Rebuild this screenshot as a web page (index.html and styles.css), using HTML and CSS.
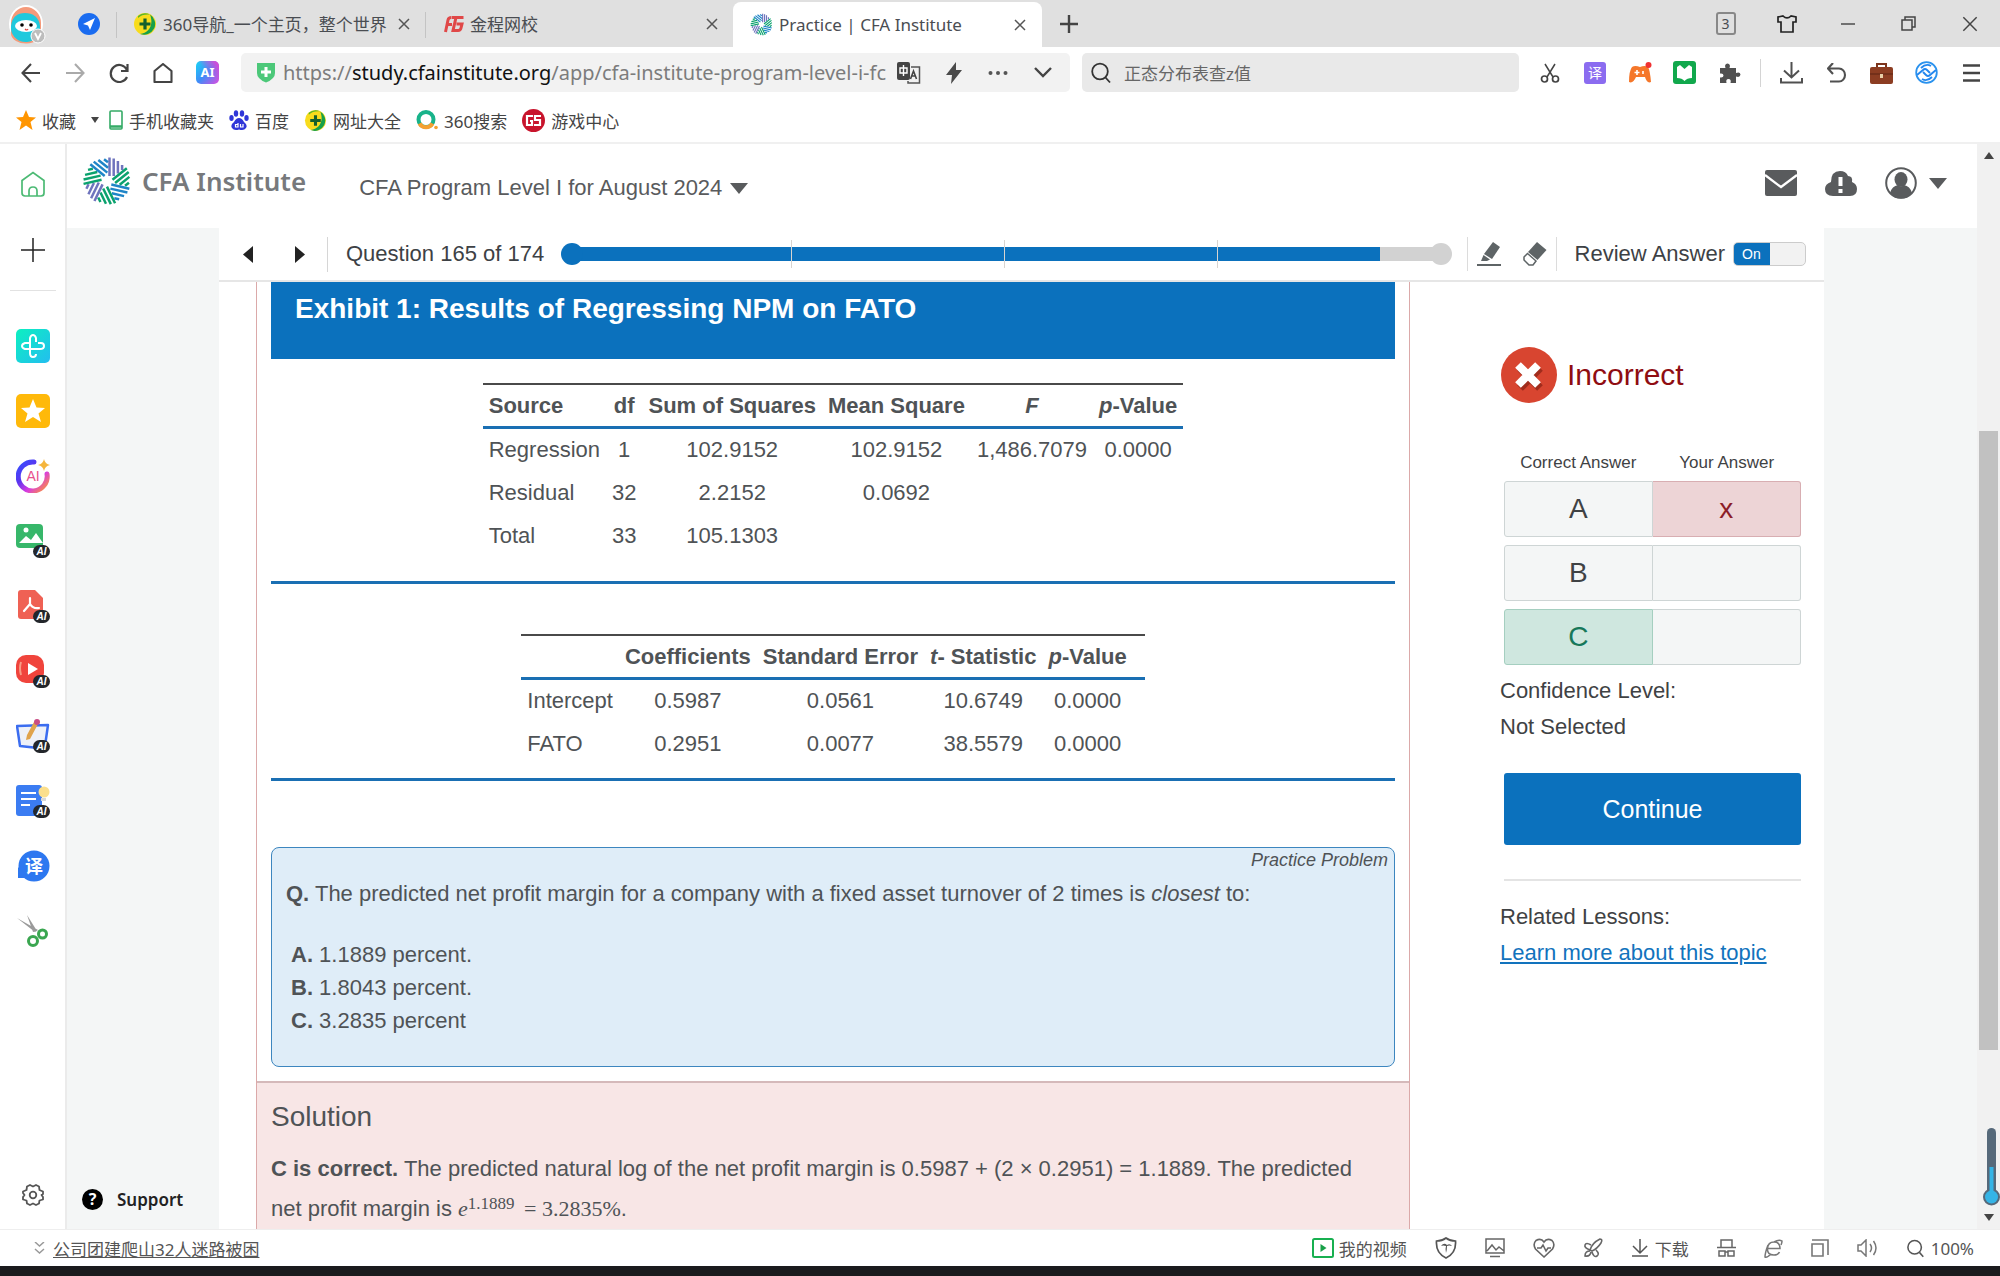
FILE: index.html
```html
<!DOCTYPE html>
<html lang="en">
<head>
<meta charset="utf-8">
<title>Practice | CFA Institute</title>
<link rel="stylesheet" href="styles.css">
</head>
<body>
<svg class="defs" aria-hidden="true">
  <defs>
    <linearGradient id="gAi" x1="0" y1="0" x2="1" y2="1"><stop offset="0" stop-color="#18d6f5"/><stop offset=".5" stop-color="#3f8cf8"/><stop offset="1" stop-color="#e04be0"/></linearGradient>
    <linearGradient id="gPink" x1="0" y1="1" x2="1" y2="0"><stop offset=".5" stop-color="#f43ccf" stop-opacity="0"/><stop offset="1" stop-color="#f43ccf"/></linearGradient>
    <linearGradient id="gTeal" x1="0" y1="0" x2="1" y2="1"><stop offset="0" stop-color="#0cf0c0"/><stop offset="1" stop-color="#23bdf0"/></linearGradient>
    <linearGradient id="gRing" x1="0" y1="0" x2="1" y2="1"><stop offset="0" stop-color="#3450ff"/><stop offset=".35" stop-color="#5a35f0"/><stop offset=".65" stop-color="#d83be0"/><stop offset="1" stop-color="#ff9a2e"/></linearGradient>
    <symbol id="ray" viewBox="0 0 50 50" overflow="visible">
      <path d="M27.500 20V1.500M31.700 20V2.500M35.900 17.500V5M40.100 14V9" fill="none" stroke-width="2.500"/>
    </symbol>
    <symbol id="burst" viewBox="0 0 50 50">
      <g stroke="#6f74bd" transform="rotate(0 25 25)"><use href="#ray" width="50" height="50"/></g>
      <g stroke="#0ba26e" transform="rotate(51 25 25)"><use href="#ray" width="50" height="50"/></g>
      <g stroke="#1f85c7" transform="rotate(103 25 25)"><use href="#ray" width="50" height="50"/></g>
      <g stroke="#0ba26e" transform="rotate(154 25 25)"><use href="#ray" width="50" height="50"/></g>
      <g stroke="#6f74bd" transform="rotate(206 25 25)"><use href="#ray" width="50" height="50"/></g>
      <g stroke="#0ba26e" transform="rotate(257 25 25)"><use href="#ray" width="50" height="50"/></g>
      <g stroke="#1f85c7" transform="rotate(309 25 25)"><use href="#ray" width="50" height="50"/></g>
    </symbol>
    <symbol id="plusball" viewBox="0 0 24 24">
      <circle cx="12" cy="12" r="11" fill="#f8dc1c"/><path d="M17 2.500A11 11 0 0 1 7 22c9-1 14-9 10-19.500z" fill="#18a04a"/><path d="M5 4a11 11 0 0 1 12-1.500C12 2 8 3 5 6z" fill="#58b52c"/>
      <path d="M12 6.500v11M6.500 12h11" stroke="#14602c" stroke-width="3.200"/>
    </symbol>
    <symbol id="cross" viewBox="0 0 12 12"><path d="M1 1l10 10M11 1L1 11" fill="none" stroke="#555" stroke-width="1.500"/></symbol>
    <symbol id="caret" viewBox="0 0 18 11"><path d="M0 0h18L9 11z" fill="currentColor"/></symbol>
    <symbol id="lens" viewBox="0 0 22 22"><circle cx="10" cy="9.500" r="7.800" fill="none" stroke="currentColor" stroke-width="1.800"/><path d="M15.500 15.500L20 20.500" stroke="currentColor" stroke-width="1.800"/></symbol>
    <symbol id="aibadge" viewBox="0 0 17 13"><rect width="17" height="13" rx="6.500" fill="#23262b"/><text x="8.500" y="10" font-size="10" font-weight="700" font-style="italic" fill="#fff" text-anchor="middle">AI</text></symbol>
  </defs>
</svg>

<div class="browser">
  <header class="tabstrip">
    <button class="avatar" aria-label="Profile"><svg width="38" height="40" viewBox="0 0 38 40"><ellipse cx="18" cy="20" rx="17" ry="19" fill="#fff"/><path d="M3 19a15 16 0 0 1 30 0v10a15 10 0 0 1-30 1z" fill="#f59a7a"/><path d="M3 22c1-9 6-13 14-13s14 4 15 13a14.500 14.500 0 0 1-29 3z" fill="#20c9dd"/><ellipse cx="18" cy="22" rx="11" ry="6" fill="#fff"/><circle cx="14" cy="21" r="1.800"/><circle cx="23" cy="21" r="1.800"/><path d="M17 25q2 2 3 0" fill="none" stroke="#d44" stroke-width="1.200"/><circle cx="30" cy="32" r="7" fill="#bdbdbd" stroke="#fff"/><path d="M27 29l3 6 3-6" fill="none" stroke="#fff" stroke-width="1.800"/></svg></button>
    <button class="nav-bubble" aria-label="Navigate"><svg width="22" height="22" viewBox="0 0 22 22"><circle cx="11" cy="11" r="11" fill="#1a6cf0"/><path d="M17 5L5 11l5 1.500L12 17z" fill="#fff"/></svg></button>
    <div class="tab tab-first"><svg width="24" height="24"><use href="#plusball"/></svg><span>360导航_一个主页，整个世界</span><button aria-label="Close tab"><svg width="12" height="12"><use href="#cross"/></svg></button></div>
    <div class="tab tab-wide"><svg width="20" height="18" viewBox="0 0 20 18"><path d="M8 2.500H19.500M7.500 2.500Q4.500 2.500 4 5L1.500 17M3 9.500h5M12 2.500L9 15.500h5q2.500 0 3-2.500l1-4h-5.500" fill="none" stroke="#e04848" stroke-width="3"/></svg><span>金程网校</span><button aria-label="Close tab"><svg width="12" height="12"><use href="#cross"/></svg></button></div>
    <div class="tab tab-active"><svg width="23" height="23"><use href="#burst"/></svg><span>Practice | CFA Institute</span><button aria-label="Close tab"><svg width="12" height="12"><use href="#cross"/></svg></button></div>
    <button class="newtab" aria-label="New tab"><svg width="18" height="18" viewBox="0 0 18 18"><path d="M9 0v18M0 9h18" stroke="#444" stroke-width="2.400"/></svg></button>
    <div class="window-tools">
      <button class="tool"><span class="count">3</span></button>
      <button class="tool" aria-label="Skins"><svg width="20" height="18" viewBox="0 0 20 18"><path d="M6 1q4 4 8 0l5 1v5h-3v10H4V7H1V2z" fill="none" stroke="#222" stroke-width="1.700"/></svg></button>
      <button class="tool" aria-label="Minimise"><svg width="14" height="14" viewBox="0 0 14 14"><path d="M0 7h14" stroke="#555" stroke-width="1.600"/></svg></button>
      <button class="tool" aria-label="Restore"><svg width="15" height="15" viewBox="0 0 15 15"><path d="M1 4h10v10H1zM4 4V1h10v10h-3" fill="none" stroke="#444" stroke-width="1.500"/></svg></button>
      <button class="tool" aria-label="Close"><svg width="16" height="16" viewBox="0 0 12 12"><path d="M1 1l10 10M11 1L1 11" stroke="#444" stroke-width="1.100"/></svg></button>
    </div>
  </header>

  <div class="toolbar">
    <div class="nav-buttons">
      <button aria-label="Back"><svg width="20" height="20" viewBox="0 0 20 20"><path d="M19 10H2M10 1L1.500 10l8.500 9" fill="none" stroke="#444" stroke-width="2.100"/></svg></button>
      <button aria-label="Forward"><svg width="20" height="20" viewBox="0 0 20 20"><path d="M1 10h17M10 1l8.500 9-8.500 9" fill="none" stroke="#aaa" stroke-width="2.100"/></svg></button>
      <button aria-label="Reload"><svg width="20" height="20" viewBox="0 0 20 20"><path d="M18 7A8.500 8.500 0 1 0 18 14M18.500 1v7H12" fill="none" stroke="#444" stroke-width="2.200"/></svg></button>
      <button aria-label="Home"><svg width="20" height="20" viewBox="0 0 20 20"><path d="M1.500 8L10 1l8.500 7v11h-17z" fill="none" stroke="#444" stroke-width="2.100" stroke-linejoin="round"/></svg></button>
      <button aria-label="AI"><svg width="23" height="23" viewBox="0 0 23 23"><rect width="23" height="23" rx="5" fill="url(#gAi)"/><rect width="23" height="23" rx="5" fill="url(#gPink)"/><text x="11.500" y="16" font-size="13" font-weight="700" fill="#fff" text-anchor="middle">AI</text></svg></button>
    </div>
    <div class="address">
      <svg width="20" height="21" viewBox="0 0 20 21"><path d="M1 1h18v10q0 6-9 9.500Q1 17 1 11z" fill="#4cc879"/><path d="M10 5v10M5 10h10" stroke="#fff" stroke-width="3"/></svg>
      <span class="url">https://<b>study.cfainstitute.org</b>/app/cfa-institute-program-level-i-fc</span>
      <button aria-label="Translate"><svg width="24" height="22" viewBox="0 0 24 22"><rect width="13" height="18" rx="2" fill="#444"/><path d="M3 6h7v5H3zM6.500 3v11" fill="none" stroke="#fff" stroke-width="1.400"/><path d="M14 5h8.500v16H11v-2" fill="none" stroke="#555" stroke-width="1.500"/><path d="M13.500 17l3-8 3 8M14.500 14h4" fill="none" stroke="#444" stroke-width="1.600"/></svg></button>
      <button aria-label="Accelerate"><svg width="18" height="22" viewBox="0 0 18 22"><path d="M11 0L1 13h6l-1 9L17 8h-6z" fill="#4a4a4a"/></svg></button>
      <button aria-label="More"><svg width="20" height="6" viewBox="0 0 20 6"><g fill="#555"><circle cx="2.500" cy="3" r="2"/><circle cx="10" cy="3" r="2"/><circle cx="17.500" cy="3" r="2"/></g></svg></button>
      <button aria-label="Expand"><svg width="18" height="11" viewBox="0 0 18 11"><path d="M1 1l8 8 8-8" fill="none" stroke="#444" stroke-width="2.400"/></svg></button>
    </div>
    <label class="search"><svg width="22" height="22"><use href="#lens"/></svg><input type="text" value="正态分布表查z值" aria-label="Search"></label>
    <div class="ext">
      <button aria-label="Cut"><svg width="20" height="20" viewBox="0 0 20 20"><path d="M5 1l8 13M15 1L7 14" stroke="#444" stroke-width="1.500"/><g fill="none" stroke="#444" stroke-width="1.700"><circle cx="4.500" cy="16" r="3"/><circle cx="15.500" cy="16" r="3"/></g></svg></button>
      <button aria-label="Dictionary"><svg width="22" height="22" viewBox="0 0 22 22"><rect width="22" height="22" rx="3" fill="#8b6cf0"/><text x="11" y="16" font-size="14" fill="#fff" text-anchor="middle">译</text></svg></button>
      <button aria-label="Games"><svg width="24" height="22" viewBox="0 0 24 22"><path d="M4 5q3-2 8 0 5-2 8 0 2 3 3 15-4 2-6-5H8q-3 7-7 5Q1 9 4 5z" fill="#f5772a"/><circle cx="20.500" cy="3" r="3" fill="#f03232"/><path d="M9 8v5M6.500 10.500h5M15 9v3" stroke="#fff" stroke-width="1.600"/></svg></button>
      <button aria-label="Reader"><svg width="23" height="23" viewBox="0 0 23 23"><rect width="23" height="23" rx="3" fill="#11a84c"/><path d="M4 6l3-2 4.500 4L16 4l3 2v11q-5 0-7.500 3Q9 17 4 17z" fill="#fff"/></svg></button>
      <button aria-label="Extensions"><svg width="22" height="20" viewBox="0 0 22 20"><path d="M1 5h5.500Q5 1 8.500 0.500 12 1 10.500 5H17v5q4-1.500 4.500 1.500Q21 15 17 13.500V20h-5.500q1-4-2-4t-2 4H1v-5.500q3.500.500 3.500-2T1 10.500z" fill="#505050"/></svg></button>
      <i class="vline"></i>
      <button aria-label="Downloads"><svg width="23" height="22" viewBox="0 0 23 22"><path d="M11.500 0v15M4 8.500l7.500 7 7.500-7M1 16v4.500h21V16" fill="none" stroke="#505050" stroke-width="2"/></svg></button>
      <button aria-label="Undo"><svg width="20" height="20" viewBox="0 0 20 20"><path d="M6 0L1 5.500 6 11M1 5.500h11a6 6.500 0 0 1 0 13H3" fill="none" stroke="#505050" stroke-width="2.100"/></svg></button>
      <button aria-label="Toolbox"><svg width="23" height="22" viewBox="0 0 23 22"><path d="M7 5V2h9v3" fill="none" stroke="#7c341c" stroke-width="2"/><rect y="5" width="23" height="17" rx="2" fill="#8c3d22"/><path d="M0 12h23" stroke="#5d2412"/><rect x="10" y="12" width="3" height="4" fill="#e8cfa8"/></svg></button>
      <button aria-label="Sync"><svg width="23" height="23" viewBox="0 0 23 23"><circle cx="11.500" cy="11.500" r="10.300" fill="none" stroke="#2a92ee" stroke-width="1.800"/><path d="M2 14l6-5q2-2 4 0l3 3M21 9l-6 5q-2 2-4 0l-3-3M7 18q5 3 10-2M16 5q-5-3-10 2" fill="none" stroke="#2387ee" stroke-width="1.900"/></svg></button>
      <button aria-label="Menu"><svg width="17" height="18" viewBox="0 0 17 18"><path d="M0 1.500h17M0 9h17M0 16.500h17" stroke="#444" stroke-width="2.300"/></svg></button>
    </div>
  </div>

  <nav class="bookmarks">
    <a href="#" class="fav"><svg width="20" height="20" viewBox="0 0 20 20"><path d="M10 0l3 7 7 .500-5.500 4.500 2 8L10 15.500 3.500 20l2-8L0 7.500 7 7z" fill="#ff9500"/></svg>收藏<svg class="mini" width="8" height="6" viewBox="0 0 8 6"><path d="M0 0h8L4 6z" fill="#444"/></svg></a>
    <a href="#" class="phone"><svg width="14" height="20" viewBox="0 0 14 20"><rect x="1" y="1" width="12" height="18" rx="1" fill="none" stroke="#35ab66" stroke-width="1.600"/><path d="M1 16.500h12" stroke="#35ab66" stroke-width="2.500"/></svg>手机收藏夹</a>
    <a href="#"><svg width="20" height="20" viewBox="0 0 20 20"><g fill="#2f36d8"><ellipse cx="2.500" cy="8" rx="2.200" ry="3"/><ellipse cx="7" cy="3.500" rx="2.200" ry="3.200"/><ellipse cx="13" cy="3.500" rx="2.200" ry="3.200"/><ellipse cx="17.500" cy="8" rx="2.200" ry="3"/><path d="M10 8q3 0 5 4 4 3 2 6t-7 1.500Q5 21 3 18t2-6q2-4 5-4z"/></g><path d="M9 13v4H6.500v-2.500H9M11.500 14v3h2.500v-3" fill="none" stroke="#fff" stroke-width="1.200"/></svg>百度</a>
    <a href="#"><svg width="23" height="23"><use href="#plusball"/></svg>网址大全</a>
    <a href="#"><svg width="22" height="22" viewBox="0 0 22 22"><circle cx="10" cy="10.500" r="7.500" fill="none" stroke="#18b38a" stroke-width="4"/><path d="M3.500 14.500a7.500 7.500 0 0 0 13 0" fill="none" stroke="#f5a030" stroke-width="4"/><circle cx="20" cy="18.500" r="1.800" fill="#f5a030"/></svg>360搜索</a>
    <a href="#"><svg width="23" height="23" viewBox="0 0 23 23"><circle cx="11.500" cy="11.500" r="11.500" fill="#c8142c"/><path d="M11 7H5v9h5v-4H8M19 7h-6v4h5v5h-6" fill="none" stroke="#fff" stroke-width="2.200"/></svg>游戏中心</a>
  </nav>

  <div class="workspace">
    <nav class="rail">
      <button aria-label="Home"><svg width="26" height="28" viewBox="0 0 26 28"><path d="M2 9.500L13 1.500l11 8V22q0 3-3 3H5q-3 0-3-3z" fill="none" stroke="#4cba74" stroke-width="1.700"/><path d="M9 25v-5q0-4 4-4t4 4v5" fill="none" stroke="#4cba74" stroke-width="1.700"/></svg></button>
      <button aria-label="Add"><svg width="24" height="24" viewBox="0 0 24 24"><path d="M12 0v24M0 12h24" stroke="#222" stroke-width="1.500"/></svg></button>
      <hr>
      <button aria-label="Health"><svg width="34" height="34" viewBox="0 0 34 34"><rect width="34" height="34" rx="5" fill="url(#gTeal)"/><path d="M20 13V9q-1-3-3-3t-3 3v15q0 4 3 4t3-3M13 14H9q-3 1-3 3t3 3h15q4 0 4-3t-3-3h-3" fill="none" stroke="#fff" stroke-width="2"/></svg></button>
      <button aria-label="Favourites"><svg width="34" height="34" viewBox="0 0 34 34"><rect width="34" height="34" rx="5" fill="#ffb90a"/><path d="M17 5l3.500 8.500 8.500.500-6.500 5.500L25 28l-8-5-8 5 2.500-8.500L5 14l8.500-.500z" fill="#fff"/></svg></button>
      <button aria-label="AI assistant"><svg width="34" height="34" viewBox="0 0 34 34"><path d="M18 3A14.500 14.500 0 1 0 31 15" fill="none" stroke="url(#gRing)" stroke-width="5" stroke-linecap="round"/><text x="17" y="22" font-size="14" fill="#e8508c" text-anchor="middle">AI</text><path d="M28 0q1 5 6 6-5 1-6 6-1-5-6-6 5-1 6-6z" fill="#f5b53c"/></svg></button>
      <button aria-label="AI images"><svg width="34" height="34" viewBox="0 0 34 34"><rect width="27" height="24" rx="4" fill="#37b76a"/><circle cx="10" cy="6" r="2.500" fill="#fff"/><path d="M3 19l7-7 5 4 5-7 7 10z" fill="#fff"/><use href="#aibadge" x="17" y="21" width="17" height="13"/></svg></button>
      <button aria-label="AI PDF"><svg width="34" height="34" viewBox="0 0 34 34"><path d="M5 1h14l8 8v21H5q-3 0-3-3V4q0-3 3-3z" fill="#ef6154"/><path d="M14 9v6l-6 7M14 15q3 5 9 4" fill="none" stroke="#fff" stroke-width="2.200" stroke-linecap="round"/><use href="#aibadge" x="17" y="21" width="17" height="13"/></svg></button>
      <button aria-label="AI video"><svg width="34" height="34" viewBox="0 0 34 34"><rect y="1" width="28" height="28" rx="10" fill="#f0443c"/><path d="M5 8q-2 6 0 13" fill="none" stroke="#f79b84" stroke-width="2"/><path d="M12 9l10 6-10 6z" fill="#fff"/><use href="#aibadge" x="17" y="21" width="17" height="13"/></svg></button>
      <button aria-label="AI writing"><svg width="34" height="34" viewBox="0 0 34 34"><path d="M1 7l31-1-3 21-7 2L4 27z" fill="#eef1f8" stroke="#3b6df0" stroke-width="2.500" stroke-linejoin="round"/><path d="M18 3l4 2-8 15-4 1 1-5z" fill="#e0a34c"/><circle cx="21" cy="3" r="3" fill="#c94c84"/><use href="#aibadge" x="17" y="21" width="17" height="13"/></svg></button>
      <button aria-label="AI documents"><svg width="34" height="34" viewBox="0 0 34 34"><rect y="1" width="26" height="31" rx="3" fill="#3b7cf2"/><path d="M5 9h15M5 15h15M5 21h9" stroke="#fff" stroke-width="2.200"/><circle cx="28" cy="8" r="5.500" fill="#fbdf8c"/><path d="M25 14h5v3h-5z" fill="#d8d8d8"/><use href="#aibadge" x="17" y="21" width="17" height="13"/></svg></button>
      <button aria-label="Translate"><svg width="34" height="34" viewBox="0 0 34 34"><circle cx="18" cy="17" r="15.500" fill="#2d78f0"/><path d="M2 18v11h11z" fill="#2d78f0"/><text x="18" y="24" font-size="18" font-weight="700" fill="#fff" text-anchor="middle">译</text></svg></button>
      <button aria-label="Screenshot"><svg width="34" height="34" viewBox="0 0 34 34"><path d="M1 4l18 14 3-2zM11 1l6 17 4-1z" fill="#9a9a9a"/><g fill="none" stroke="#3aa650" stroke-width="3"><circle cx="17" cy="27" r="4.500"/><circle cx="26.500" cy="20" r="4"/></g></svg></button>
      <button class="rail-end" aria-label="Settings"><svg width="24" height="24" viewBox="0 0 24 24"><path d="M9 2l3 1.500L15 2l3 1.500.500 3.500 3.500 1.500v2.500L20.500 12l1.500 2v2.500L18.500 17.500 18 20.500 15 22l-3-1.500L9 22l-3-1.500-.500-3L2 16.500V14l1.500-2L2 10V8.500L5.500 7 6 3.500z" fill="none" stroke="#555" stroke-width="1.800" stroke-linejoin="round"/><circle cx="12" cy="12" r="3.300" fill="none" stroke="#555" stroke-width="1.800"/></svg></button>
    </nav>

    <div class="site">
      <header class="site-head">
        <a class="brand" href="#"><svg width="50" height="50"><use href="#burst"/></svg>CFA Institute</a>
        <button class="program">CFA Program Level I for August 2024<svg width="18" height="11"><use href="#caret"/></svg></button>
        <div class="account">
          <button aria-label="Messages"><svg width="32" height="26" viewBox="0 0 32 26"><path d="M2 0h28q2 0 2 2v22q0 2-2 2H2q-2 0-2-2V2q0-2 2-2z" fill="#595b5d"/><path d="M0 5l16 12L32 5" fill="none" stroke="#fff" stroke-width="2.200"/></svg></button>
          <button aria-label="Alerts"><svg width="32" height="25" viewBox="0 0 32 25"><path d="M8 25q-8 0-8-7 0-5 6-7 0-11 9-11 6 0 8 5 5 0 4 6 5 2 5 7 0 7-7 7z" fill="#595b5d"/><path d="M15.500 6v9M15.500 18v4" stroke="#fff" stroke-width="4"/></svg></button>
          <button class="user" aria-label="Account"><svg width="32" height="32" viewBox="0 0 32 32"><circle cx="16" cy="16" r="14.800" fill="none" stroke="#595b5d" stroke-width="2"/><ellipse cx="16" cy="12.500" rx="6.500" ry="7.500" fill="#595b5d"/><path d="M5 26q2-7 8-8l3 2 3-2q6 1 8 8-4 5.500-11 5.500T5 26z" fill="#595b5d"/></svg><svg width="18" height="11"><use href="#caret"/></svg></button>
        </div>
      </header>

      <div class="canvas">
        <div class="support-col"><button class="support"><svg width="21" height="21" viewBox="0 0 21 21"><circle cx="10.500" cy="10.500" r="10.500"/><text x="10.500" y="16" font-size="16" font-weight="700" fill="#fff" text-anchor="middle">?</text></svg>Support</button></div>
        <main class="practice">
          <div class="qbar">
            <div class="pager">
              <button aria-label="Previous"><svg width="10" height="17" viewBox="0 0 10 17"><path d="M10 0v17L0 8.500z" fill="#222"/></svg></button>
              <button aria-label="Next"><svg width="10" height="17" viewBox="0 0 10 17"><path d="M0 0v17l10-8.500z" fill="#222"/></svg></button>
            </div>
            <div class="progress">
              <span>Question 165 of 174</span>
              <div class="track" role="progressbar" aria-valuenow="165" aria-valuemax="174" aria-label="Progress">
                <div class="fill" style="width:93%"></div>
                <div class="ticks"><i></i><i></i><i></i><i></i></div>
              </div>
            </div>
            <div class="pens">
              <button aria-label="Highlight"><svg width="24" height="24" viewBox="0 0 24 24"><path d="M16 0l7 5-8 12-8-5z" fill="#5e6466"/><path d="M6.500 13l6.500 4.500L10 19H4z" fill="#5e6466"/><path d="M0 23h24" stroke="#5e6466" stroke-width="2"/></svg></button>
              <button aria-label="Erase"><svg width="24" height="24" viewBox="0 0 24 24"><path d="M14 0l9.500 8-9 10L5 10z" fill="#5e6466"/><path d="M4.500 11.500l8.500 7.500-3 4H6L1 18v-3z" fill="none" stroke="#5e6466" stroke-width="1.500"/></svg></button>
            </div>
            <label class="review">Review Answer<input type="checkbox" checked><span class="switch">On</span></label>
          </div>

          <div class="columns">
            <article class="problem">
              <section class="exhibit">
                <h2>Exhibit 1: Results of Regressing NPM on FATO</h2>
                <div class="sheet sheet-one">
                  <table>
                    <thead><tr><th>Source</th><th>df</th><th>Sum of Squares</th><th>Mean Square</th><th><em>F</em></th><th><em>p</em>-Value</th></tr></thead>
                    <tbody>
                      <tr><td>Regression</td><td>1</td><td>102.9152</td><td>102.9152</td><td>1,486.7079</td><td>0.0000</td></tr>
                      <tr><td>Residual</td><td>32</td><td>2.2152</td><td>0.0692</td><td></td><td></td></tr>
                      <tr><td>Total</td><td>33</td><td>105.1303</td><td></td><td></td><td></td></tr>
                    </tbody>
                  </table>
                </div>
                <div class="sheet sheet-two">
                  <table>
                    <thead><tr><th></th><th>Coefficients</th><th>Standard Error</th><th><em>t</em>- Statistic</th><th><em>p</em>-Value</th><th></th></tr></thead>
                    <tbody>
                      <tr><td>Intercept</td><td>0.5987</td><td>0.0561</td><td>10.6749</td><td>0.0000</td><td></td></tr>
                      <tr><td>FATO</td><td>0.2951</td><td>0.0077</td><td>38.5579</td><td>0.0000</td><td></td></tr>
                    </tbody>
                  </table>
                </div>
                <div class="question">
                  <p class="kind">Practice Problem</p>
                  <p class="stem"><b>Q.</b> The predicted net profit margin for a company with a fixed asset turnover of 2 times is <em>closest</em> to:</p>
                  <ul>
                    <li><b>A.</b> 1.1889 percent.</li>
                    <li><b>B.</b> 1.8043 percent.</li>
                    <li><b>C.</b> 3.2835 percent</li>
                  </ul>
                </div>
              </section>
              <section class="solution">
                <h3>Solution</h3>
                <p><b>C is correct.</b> The predicted natural log of the net profit margin is 0.5987 + (2 × 0.2951) = 1.1889. The predicted net profit margin is <span class="math"><em>e</em><sup>1.1889</sup> = 3.2835%</span>.</p>
              </section>
            </article>

            <aside class="result">
              <div class="verdict"><svg width="58" height="58" viewBox="0 0 58 58"><circle cx="29" cy="29" r="28" fill="#d84530"/><path d="M20 22l20 20M40 22L20 42" stroke="#a02c1c" stroke-width="8"/><path d="M18 19l20 20M38 19L18 39" stroke="#fff" stroke-width="8"/></svg>Incorrect</div>
              <table class="answers">
                <thead><tr><th>Correct Answer</th><th>Your Answer</th></tr></thead>
                <tbody>
                  <tr><td>A</td><td class="wrong">x</td></tr>
                  <tr><td>B</td><td></td></tr>
                  <tr><td class="right">C</td><td></td></tr>
                </tbody>
              </table>
              <p>Confidence Level:<br>Not Selected</p>
              <button class="continue">Continue</button>
              <hr>
              <p>Related Lessons:<br><a href="#">Learn more about this topic</a></p>
            </aside>
          </div>
        </main>
      </div>
    </div>

    <div class="scroll">
      <svg width="10" height="7" viewBox="0 0 10 7"><path d="M0 7L5 0l5 7z" fill="#444"/></svg>
      <div class="lane"><div class="thumb"></div></div>
      <svg width="10" height="7" viewBox="0 0 10 7"><path d="M0 0h10L5 7z" fill="#444"/></svg>
      <svg class="thermo" width="17" height="80" viewBox="0 0 17 80"><rect x="4" y="1" width="9" height="66" rx="4.500" fill="#56697a"/><circle cx="8.500" cy="70" r="8.500" fill="#56697a"/><circle cx="8.500" cy="70" r="6.500" fill="#35b4e6"/><path d="M8.500 40v28" stroke="#35b4e6" stroke-width="4"/></svg>
    </div>
  </div>

  <footer class="status">
    <a class="news" href="#"><svg width="11" height="12" viewBox="0 0 11 12"><path d="M1 0l4.500 4L10 0M1 7l4.500 4L10 7" fill="none" stroke="#999" stroke-width="1.500"/></svg><u>公司团建爬山32人迷路被困</u></a>
    <div class="status-tools">
      <button class="video"><svg width="22" height="20" viewBox="0 0 22 20"><rect x="1" y="1" width="20" height="18" rx="1.500" fill="none" stroke="#18b050" stroke-width="2"/><path d="M8.500 6v8l6-4z" fill="#18a048"/></svg>我的视频</button>
      <button aria-label="Protection"><svg width="22" height="22" viewBox="0 0 22 22"><path d="M11 1q4 3 9.500 3 1 12-9.500 17Q.500 16 1.500 4 7 4 11 1z" fill="none" stroke="#555" stroke-width="1.700"/><path d="M6 9q3-4 6-1 3-2 5 1-3-1-5 0 0 4-1 7-1-4 0-7-3-1-5 0z" fill="#555"/></svg></button>
      <button aria-label="Wallpaper"><svg width="20" height="20" viewBox="0 0 20 20"><path d="M1 1h18v14H1zM2 13l5-6 4 5 3-3 5 4M5 18.500h10" fill="none" stroke="#666" stroke-width="1.500"/></svg></button>
      <button aria-label="Health check"><svg width="22" height="20" viewBox="0 0 22 20"><path d="M11 19L2.500 11Q-.500 6 3 2.500 8-.500 11 4q3-4.500 8-1.500 3.500 3.500.500 8.500zM4 10h4l2-3 3 6 2-3h3" fill="none" stroke="#666" stroke-width="1.600"/></svg></button>
      <button aria-label="Speed up"><svg width="20" height="20" viewBox="0 0 20 20"><path d="M7 12Q9 5 17 1q3 0 1 4-4 6-9 8zM8 7Q3 4 2 7t5 5M13 12q4 4 1 6t-5-4M7 13q-5 0-5 5 5 1 6-4" fill="none" stroke="#666" stroke-width="1.600"/></svg></button>
      <button class="down"><svg width="18" height="18" viewBox="0 0 18 18"><path d="M9 0v13M2 7l7 7 7-7M1 17h16" fill="none" stroke="#555" stroke-width="1.500"/></svg>下载</button>
      <button aria-label="Private"><svg width="19" height="18" viewBox="0 0 19 18"><path d="M4 8V1h11v7M0 8.500h19M2 12h6v5H2zM11 12h6v5h-6zM8 13h3" fill="none" stroke="#666" stroke-width="1.500"/></svg></button>
      <button aria-label="Engine"><svg width="19" height="19" viewBox="0 0 19 19"><path d="M4 9.500h12Q16 3 10 3T3.500 9.500 10 16q4 0 5.500-3M4 6Q1 14 1 18q2 1 6-3M10 3q5-3 8-1 0 2-1 4" fill="none" stroke="#777" stroke-width="1.500"/></svg></button>
      <button aria-label="Windows"><svg width="18" height="18" viewBox="0 0 18 18"><path d="M1 5h11v12H1zM1 1h16v15" fill="none" stroke="#777" stroke-width="1.600"/></svg></button>
      <button aria-label="Sound"><svg width="21" height="18" viewBox="0 0 21 18"><path d="M1 6h3l5-5v16l-5-5H1zM13 5q3 4 0 8M16.500 2q5 7 0 14" fill="none" stroke="#777" stroke-width="1.500"/></svg></button>
      <button class="zoom"><svg width="19" height="19"><use href="#lens"/></svg>100%</button>
    </div>
  </footer>
  <div class="desk"></div>
</div>
</body>
</html>
```

FILE: styles.css
```css
* { box-sizing: border-box; }

body {
  margin: 0;
  font-family: "Liberation Sans", "Noto Sans CJK SC", sans-serif;
  font-size: 22px;
  color: #3d4145;
  background: #fff;
}

h2, h3, p, ul { margin: 0; padding: 0; }
ul { list-style: none; }
svg { display: block; flex: none; }
.defs { position: absolute; width: 0; height: 0; }

button {
  display: flex;
  align-items: center;
  justify-content: center;
  border: 0;
  padding: 0;
  background: none;
  color: inherit;
  font: inherit;
}

.browser { display: flex; flex-direction: column; height: 100vh; overflow: hidden; }

/* Browser chrome */
.tabstrip, .toolbar, .bookmarks, .status {
  display: flex;
  align-items: center;
  flex: none;
  font-family: "Noto Sans", "Noto Sans CJK SC", sans-serif;
  font-size: 17px;
  color: #4a4d52;
}

.tabstrip { height: 47px; padding-left: 8px; background: #e0e0e0; }
.avatar { width: 38px; }
.nav-bubble { width: 86px; }
.tab { display: flex; align-items: center; gap: 6px; height: 45px; white-space: nowrap; }
.tab span { flex: 1; overflow: hidden; }
.tab-first { width: 309px; padding: 0 15px 0 17px; }
.tab-wide { width: 308px; padding: 0 15px 0 19px; }
.tab-first, .tab-wide { background: linear-gradient(#c4c4c4, #c4c4c4) 0 60% / 1px 26px no-repeat; }
.tab-active { align-self: flex-end; width: 309px; padding: 0 16px 0 17px; border-radius: 8px 8px 0 0; background: #fff; }
.tabstrip .tab-first { margin-left: -16px; }
.tab-first, .tab-wide, .tab-active, .avatar, .nav-bubble, .newtab { flex: none; }
.newtab { margin-left: 18px; }
.window-tools { display: flex; margin-left: auto; height: 40px; }
.tool { width: 61px; }
.count { width: 20px; height: 23px; border: 2px solid #888; border-radius: 3px; font-size: 14px; line-height: 19px; text-align: center; }

.toolbar { height: 51px; padding-right: 6px; }
.nav-buttons { display: flex; width: 241px; padding-left: 9px; }
.nav-buttons button { width: 44px; }
.address { display: flex; align-items: center; flex: 804; height: 39px; padding: 0 5px 0 15px; border-radius: 5px; background: #f2f2f2; }
.url { flex: 1 1 0; min-width: 0; margin: 0 8px 0 7px; overflow: hidden; white-space: nowrap; font-size: 20px; color: #7c7c7c; }
.url b { font-weight: 400; color: #111; }
.address button { width: 44px; }
.address button:first-of-type { width: 30px; }
.address button:nth-of-type(2) { width: 60px; }
.address button:nth-of-type(3) { width: 28px; }
.address button:nth-of-type(4) { width: 62px; margin-right: -9px; }
.search { display: flex; align-items: center; gap: 12px; flex: 436; height: 39px; margin-left: 12px; padding-left: 8px; border-radius: 5px; background: #e9e9e9; color: #333; }
.search input { flex: 1; min-width: 0; border: 0; padding: 0; background: none; color: #666; font: inherit; }
.ext { display: flex; align-items: center; flex: none; margin-left: 8px; }
.ext button { width: 45px; height: 30px; }
.vline { width: 1px; height: 28px; margin: 0 8px; background: #d4d4d4; }

.bookmarks { height: 46px; gap: 15px; padding-left: 16px; border-bottom: 2px solid #f0f0f0; }
.bookmarks a { display: flex; align-items: center; gap: 6px; color: #444; text-decoration: none; white-space: nowrap; }
.bookmarks .fav { margin-right: -5px; }
.mini { margin-left: 9px; }

.workspace { display: flex; flex: 1; min-height: 0; }

.rail { display: flex; flex-direction: column; flex: none; width: 67px; padding-top: 8px; border-right: 2px solid #ebebeb; }
.rail button { height: 65px; flex: none; }
.rail hr { width: 46px; margin: 8px auto 22px; border: 0; border-top: 1px solid #e2e2e2; }
.rail .rail-end { margin: auto 0 2px; }

.scroll { position: relative; display: flex; flex-direction: column; align-items: center; flex: none; width: 23px; padding: 8px 0; background: #f1f1f1; }
.lane { flex: 1; width: 19px; padding-top: 272px; }
.thumb { height: 79%; background: #c1c1c1; }
.thermo { position: absolute; right: 0; bottom: 22px; }

.status { height: 37px; padding: 0 26px 0 34px; border-top: 1px solid #eee; color: #555; }
.news { display: flex; align-items: center; gap: 8px; color: #555; text-decoration: none; }
.status-tools { display: flex; align-items: center; gap: 28px; margin-left: auto; }
.status button { gap: 6px; }
.status .video { gap: 5px; }
.desk { flex: none; height: 10px; background: #1b1b1d; }

/* Learning site */
.site { display: flex; flex-direction: column; flex: 1; min-width: 0; }
.site-head { display: flex; align-items: center; flex: none; height: 84px; padding: 0 30px 0 15px; color: #595b5d; }
.brand { display: flex; align-items: center; gap: 10px; margin-bottom: 10px; color: #77797c; font-family: "Noto Sans", sans-serif; font-size: 26px; font-weight: 600; text-decoration: none; white-space: nowrap; }
.program { gap: 8px; margin: 4px 0 0 53px; white-space: nowrap; }
.account { display: flex; align-items: center; gap: 28px; margin-left: auto; margin-bottom: 6px; }
.user { gap: 12px; }

.canvas { display: grid; grid-template-columns: 152fr 1605fr 153fr; grid-template-rows: minmax(0, 1fr); flex: 1; min-height: 0; background: #f4f6f6; }
.support-col { display: flex; align-items: flex-end; min-width: 0; padding: 0 0 18px 15px; }
.support { gap: 14px; color: #222; font-family: "Noto Sans", sans-serif; font-size: 17px; font-weight: 600; }
.practice { display: flex; flex-direction: column; min-width: 0; background: #fff; }

.qbar { display: flex; align-items: center; flex: none; height: 54px; border-bottom: 2px solid #e6e6e6; white-space: nowrap; }
.pager { display: flex; gap: 42px; width: 109px; height: 35px; padding-left: 24px; border-right: 1px solid #d6d6d6; }
.progress { display: flex; align-items: center; flex: 1; gap: 28px; padding-left: 18px; }
.track { position: relative; flex: 1; height: 14px; margin-right: 26px; background: #d2d2d2; }
.track::before, .track::after { content: ""; position: absolute; top: -4px; width: 22px; height: 22px; border-radius: 50%; background: #0b71bd; }
.track::before { left: -11px; }
.track::after { right: -11px; background: #d2d2d2; }
.fill { height: 100%; background: #0b71bd; }
.ticks { position: absolute; inset: -7px 0; display: grid; grid-template-columns: 220fr 213fr 213fr 223fr; }
.ticks i { border-right: 1px solid #d8d4d0; }
.ticks i:last-child { border: 0; }
.pens { display: flex; gap: 22px; padding: 5px 9px; border: solid #dcdcdc; border-width: 0 1px; }
.review { display: flex; align-items: center; gap: 8px; padding: 0 18px; }
.review input { position: absolute; opacity: 0; }
.switch { width: 73px; height: 24px; border: 1px solid #ccc; border-radius: 5px; padding-left: 8px; background: linear-gradient(90deg, #0b71bd 36px, #f2f2f2 36px); color: #fff; font-size: 14px; line-height: 22px; }

.columns { display: grid; grid-template-columns: 1154fr 414fr; grid-template-rows: minmax(0, 1fr); flex: 1; min-height: 0; padding-left: 37px; overflow: hidden; }
.problem { display: flex; flex-direction: column; min-width: 0; border: solid #dba9a9; border-width: 0 1px; color: #4f5356; }
.exhibit { flex: none; padding: 0 14px 14px; }
.exhibit h2 { height: 77px; padding: 10px 24px; background: #0b71bd; color: #fff; font-size: 28px; line-height: 34px; white-space: nowrap; }
.sheet { display: flex; justify-content: center; border-bottom: 3px solid #1a6fb3; }
.sheet table { border-collapse: collapse; border-top: 2px solid #4a4a4a; white-space: nowrap; }
.sheet th, .sheet td { height: 43px; padding: 2px 6px 0; text-align: center; }
.sheet th:first-child, .sheet td:first-child { text-align: left; }
.sheet thead { border-bottom: 3px solid #1a6fb3; }
.sheet-one { padding: 24px 0 25px; }
.sheet-two { padding: 50px 0 14px; }
.question { margin-top: 66px; height: 220px; padding: 0 14px; border: 1px solid #3d86bf; border-radius: 8px; background: #dfedf8; }
.kind { margin-right: -8px; font-size: 18px; line-height: 24px; font-style: italic; text-align: right; }
.stem { line-height: 43px; }
.question ul { padding: 23px 5px; line-height: 33px; }
.solution { flex: 1 0 auto; padding: 17px 40px 17px 14px; border-top: 2px solid #d5b9ba; background: #f8e6e6; }
.solution h3 { margin-bottom: 15px; font-size: 28px; font-weight: 400; line-height: 34px; }
.solution p { line-height: 40px; }
.math { font-family: "Liberation Serif", serif; }
.math sup { font-size: 17px; line-height: 1; vertical-align: 7px; margin-right: 4px; }

.result { display: flex; flex-direction: column; padding: 64px 23px 0 90px; color: #3f4244; }
.verdict { display: flex; align-items: center; gap: 9px; color: #8f0d12; font-size: 30px; }
.answers { width: calc(100% - 4px); margin: 41px 0 0 4px; border-spacing: 0 8px; table-layout: fixed; }
.answers th { height: 20px; padding: 0; font-size: 17px; font-weight: 400; }
.answers td { height: 56px; border: 1px solid #ced5d5; padding: 0; background: #f4f6f6; font-size: 28px; text-align: center; }
.answers td:last-child { border-left: 0; border-radius: 0 3px 3px 0; }
.answers td:first-child { border-radius: 3px 0 0 3px; }
.answers .wrong { border-color: #d8aeb2; background: #edd4d6; color: #8c1d28; }
.answers .right { border-color: #a5cfc0; background: #cfe7df; color: #17785a; }
.result p { line-height: 36px; white-space: nowrap; }
.continue { height: 72px; margin: 28px 0 34px 4px; border-radius: 3px; background: #0b71bd; color: #fff; font-size: 25px; }
.result hr { width: calc(100% - 4px); margin: 0 0 18px 4px; border: 0; border-top: 2px solid #e4e4e4; }
.result a { color: #1273bd; }
```
